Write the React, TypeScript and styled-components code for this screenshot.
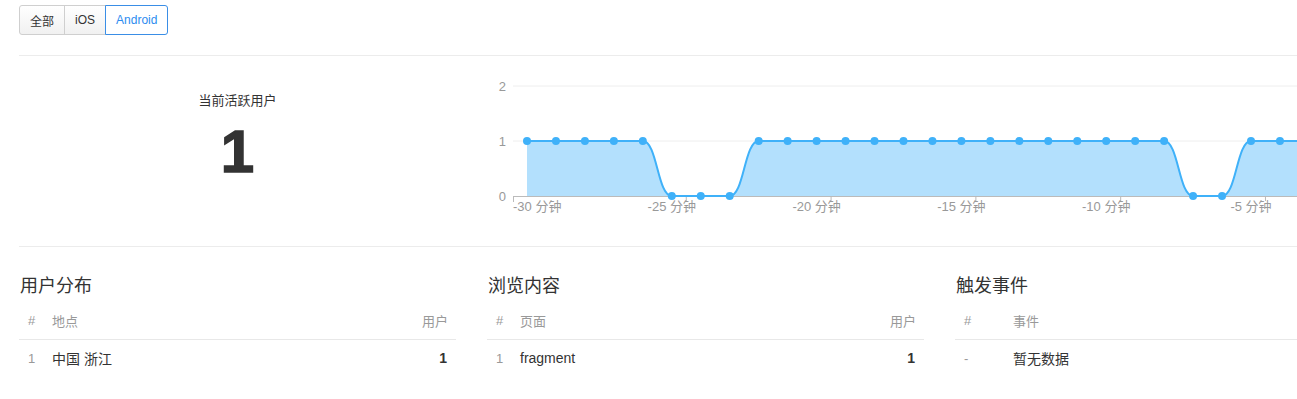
import React from 'react';
import styled, { createGlobalStyle } from 'styled-components';

const GlobalStyle = createGlobalStyle`
  html, body {
    margin: 0;
    padding: 0;
    overflow: hidden;
    background: #fff;
  }
  body {
    font-family: "Liberation Sans", Arial, "Noto Sans CJK SC", sans-serif;
    color: #333;
  }
`;

const Page = styled.div`
  width: 1373px;
  padding: 5px 0 0 19px;
`;

const ButtonGroup = styled.div`
  display: inline-flex;
  height: 30px;
`;

const FilterButton = styled.button<{ $active?: boolean; $first?: boolean; $last?: boolean }>`
  font-family: inherit;
  font-size: 12px;
  height: 30px;
  padding: 0 10px;
  margin: 0 0 0 -1px;
  cursor: pointer;
  color: ${p => (p.$active ? '#2d8cf0' : '#333')};
  background: ${p => (p.$active ? '#fff' : 'linear-gradient(#fff, #f1f1f1)')};
  border: 1px solid ${p => (p.$active ? '#3a8ee6' : '#cfcfcf')};
  position: ${p => (p.$active ? 'relative' : 'static')};
  border-radius: ${p => (p.$first ? '3px 0 0 3px' : p.$last ? '0 3px 3px 0' : '0')};
  &:first-child {
    margin-left: 0;
  }
`;

const Divider = styled.div<{ $top?: number }>`
  height: 1px;
  background: #ececec;
  margin-top: ${p => p.$top ?? 0}px;
`;

const TopSection = styled.div`
  display: grid;
  grid-template-columns: 437px 1fr;
  column-gap: 31px;
  height: 190px;
`;

const LiveBox = styled.div`
  display: flex;
  flex-direction: column;
  align-items: center;
  padding-top: 36px;
`;

const LiveLabel = styled.div`
  font-size: 13px;
  line-height: 18px;
  color: #333;
`;

const LiveNumber = styled.div`
  margin-top: 12px;
  font-size: 60px;
  line-height: 1;
  font-weight: bold;
  color: #333;
  -webkit-text-stroke: 1.5px #333;
`;

const ChartSvg = styled.svg`
  display: block;
  width: 905px;
  height: 190px;
  font-family: "Liberation Sans", Arial, "Noto Sans CJK SC", sans-serif;
`;

const Tables = styled.div`
  display: grid;
  grid-template-columns: repeat(3, 437px);
  column-gap: 31px;
  padding-top: 27px;
`;

const Block = styled.div``;

const BlockTitle = styled.h3`
  margin: 0 0 5px 1px;
  font-size: 18px;
  line-height: 24px;
  font-weight: normal;
  color: #333;
`;

const Table = styled.table`
  width: 100%;
  border-collapse: collapse;
`;

const HeadCell = styled.th<{ $w?: number; $right?: boolean }>`
  box-sizing: border-box;
  width: ${p => (p.$w ? `${p.$w}px` : 'auto')};
  height: 36px;
  padding: 0 8px 0 ${p => (p.$w ? 9 : 0)}px;
  text-align: ${p => (p.$right ? 'right' : 'left')};
  font-size: 13px;
  font-weight: normal;
  color: #999;
  border-bottom: 1px solid #e8e8e8;
`;

const Cell = styled.td<{ $index?: boolean; $right?: boolean }>`
  box-sizing: border-box;
  height: 36px;
  padding: 2px ${p => (p.$right ? 9 : 8)}px 0 ${p => (p.$index ? 9 : 0)}px;
  text-align: ${p => (p.$right ? 'right' : 'left')};
  font-size: ${p => (p.$index ? 13 : 14)}px;
  font-weight: ${p => (p.$right ? 'bold' : 'normal')};
  color: ${p => (p.$index ? '#999' : '#333')};
`;

// chart data: active users per minute, last 30 minutes
const values = [1, 1, 1, 1, 1, 0, 0, 0, 1, 1, 1, 1, 1, 1, 1, 1, 1, 1, 1, 1, 1, 1, 1, 0, 0, 1, 1, 1, 1, 1];
const X0 = 40;
const STEP = 28.96;
const Y = (v: number) => 140 - v * 55;

function linePath() {
  let d = `M${X0},${Y(values[0])}`;
  for (let i = 1; i < values.length; i++) {
    const x0 = X0 + STEP * (i - 1);
    const x1 = X0 + STEP * i;
    const h = STEP * 0.5;
    d += ` C${x0 + h},${Y(values[i - 1])} ${x1 - h},${Y(values[i])} ${x1},${Y(values[i])}`;
  }
  return d;
}

const labels = [
  { i: 0, text: '-30 分钟' },
  { i: 5, text: '-25 分钟' },
  { i: 10, text: '-20 分钟' },
  { i: 15, text: '-15 分钟' },
  { i: 20, text: '-10 分钟' },
  { i: 25, text: '-5 分钟' },
];

function ActiveChart() {
  const line = linePath();
  const lastX = X0 + STEP * (values.length - 1);
  const area = `${line} L${lastX},140 L${X0},140 Z`;
  return (
    <ChartSvg viewBox="0 0 905 190">
      <line x1={26} y1={30} x2={905} y2={30} stroke="#eeeeee" />
      <line x1={26} y1={85} x2={905} y2={85} stroke="#eeeeee" />
      <text x={19} y={34.5} fontSize={13} fill="#999" textAnchor="end">2</text>
      <text x={19} y={89.5} fontSize={13} fill="#999" textAnchor="end">1</text>
      <text x={19} y={144.5} fontSize={13} fill="#999" textAnchor="end">0</text>
      <path d={area} fill="#b3e0fd" />
      <line x1={26} y1={140.5} x2={905} y2={140.5} stroke="#bbbbbb" />
      <line x1={26.5} y1={140} x2={26.5} y2={146} stroke="#bbbbbb" />
      {labels.slice(1).map(l => (
        <line key={l.i} x1={X0 + STEP * (l.i + 0.5)} y1={140} x2={X0 + STEP * (l.i + 0.5)} y2={145} stroke="#bbbbbb" />
      ))}
      <path d={line} fill="none" stroke="#3fb1f9" strokeWidth={2} />
      {values.map((v, i) => (
        <circle key={i} cx={X0 + STEP * i} cy={Y(v)} r={4} fill="#3fb1f9" />
      ))}
      {labels.map(l => (
        <text
          key={l.i}
          x={l.i === 0 ? 26 : X0 + STEP * l.i}
          y={154.5}
          fontSize={13}
          fill="#999"
          textAnchor={l.i === 0 ? 'start' : 'middle'}
        >
          {l.text}
        </text>
      ))}
    </ChartSvg>
  );
}

export default function App() {
  return (
    <Page>
      <GlobalStyle />
      <ButtonGroup>
        <FilterButton $first>全部</FilterButton>
        <FilterButton>iOS</FilterButton>
        <FilterButton $active $last>Android</FilterButton>
      </ButtonGroup>
      <Divider $top={20} />
      <TopSection>
        <LiveBox>
          <LiveLabel>当前活跃用户</LiveLabel>
          <LiveNumber>1</LiveNumber>
        </LiveBox>
        <ActiveChart />
      </TopSection>
      <Divider />
      <Tables>
        <Block>
          <BlockTitle>用户分布</BlockTitle>
          <Table>
            <thead>
              <tr>
                <HeadCell $w={33}>#</HeadCell>
                <HeadCell>地点</HeadCell>
                <HeadCell $right>用户</HeadCell>
              </tr>
            </thead>
            <tbody>
              <tr>
                <Cell $index>1</Cell>
                <Cell>中国 浙江</Cell>
                <Cell $right>1</Cell>
              </tr>
            </tbody>
          </Table>
        </Block>
        <Block>
          <BlockTitle>浏览内容</BlockTitle>
          <Table>
            <thead>
              <tr>
                <HeadCell $w={33}>#</HeadCell>
                <HeadCell>页面</HeadCell>
                <HeadCell $right>用户</HeadCell>
              </tr>
            </thead>
            <tbody>
              <tr>
                <Cell $index>1</Cell>
                <Cell>fragment</Cell>
                <Cell $right>1</Cell>
              </tr>
            </tbody>
          </Table>
        </Block>
        <Block>
          <BlockTitle>触发事件</BlockTitle>
          <Table>
            <thead>
              <tr>
                <HeadCell $w={58}>#</HeadCell>
                <HeadCell>事件</HeadCell>
              </tr>
            </thead>
            <tbody>
              <tr>
                <Cell $index>-</Cell>
                <Cell>暂无数据</Cell>
              </tr>
            </tbody>
          </Table>
        </Block>
      </Tables>
    </Page>
  );
}
